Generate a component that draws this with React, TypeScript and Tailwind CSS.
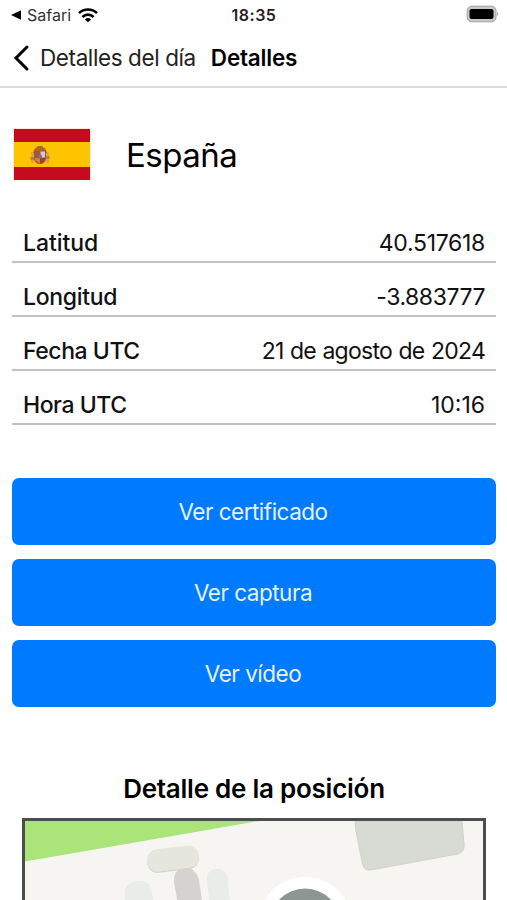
const rows = [
  { label: 'Latitud', value: '40.517618', labelClass: 'tracking-[-0.05px]', valueClass: 'tracking-[-0.3px]' },
  { label: 'Longitud', value: '-3.883777', labelClass: 'tracking-[-0.3px]', valueClass: 'tracking-[-0.45px]' },
  { label: 'Fecha UTC', value: '21 de agosto de 2024', labelClass: 'tracking-[-0.45px]', valueClass: 'tracking-[-0.75px] [word-spacing:0.75px]' },
  { label: 'Hora UTC', value: '10:16', labelClass: 'tracking-[-0.45px]', valueClass: 'tracking-[0px]' },
];

const actions = ['Ver certificado', 'Ver captura', 'Ver vídeo'];

function StatusBar() {
  return (
    <div className="grid h-[30px] shrink-0 grid-cols-3 items-center pl-[10px] pr-[8px]">
      <div className="flex items-center">
        <svg width="12" height="12" viewBox="0 0 12 12">
          <path d="M1 6 11 1.2v9.6z" fill="#000" />
        </svg>
        <span className="ml-[5px] text-[16px] leading-[20px] tracking-[0px] text-[#333]">Safari</span>
        <svg className="-mt-[1px] ml-[6px]" width="22" height="16" viewBox="0 0 22 16">
          <g fill="none" stroke="#000" strokeWidth="2.7">
            <path d="M2 6.1a13 13 0 0 1 18 0" />
            <path d="M5.4 9.9a8.2 8.2 0 0 1 11.2 0" />
          </g>
          <path d="M11 15.300 7.9 12.400a4.500 4.500 0 0 1 6.200 0z" fill="#000" />
        </svg>
      </div>
      <div className="-ml-[1px] text-center text-[16px] font-semibold leading-[20px] tracking-[0.5px] text-[#222]">18:35</div>
      <svg className="-mt-[2px] justify-self-end" width="33" height="18" viewBox="0 0 33 18">
        <rect x="1.2" y="1.2" width="28.8" height="15.6" rx="4.5" fill="#c8c8c8" stroke="#a0a0a0" strokeWidth="1" />
        <rect x="3.5" y="4" width="24" height="10" rx="2" fill="#000" />
        <path d="M31 7c1.8.8 1.8 3.2 0 4z" fill="#aaa" />
      </svg>
    </div>
  );
}

function SpainFlag() {
  return (
    <svg width="78" height="52" viewBox="0 0 78 52">
      <rect width="78" height="52" fill="#fbe6df" />
      <rect x="1" y="1" width="76" height="51" fill="#c60b1e" />
      <rect x="1" y="14" width="76" height="25" fill="#ffc400" />
      <path d="M18 24h3v11h-3zM33 24h3v11h-3z" fill="#d8a848" />
      <path d="M17.500 29h4v3h-4zM32.500 28h4v3h-4z" fill="#b9823a" />
      <path d="M20 25q1-6 7-7 6 1 7 7z" fill="#b4602f" />
      <path d="M24.5 18h5v2h-5z" fill="#8f762f" />
      <path d="M21 23h12v8q-1 5-6 5t-6-5z" fill="#a9553a" />
      <path d="M27.5 23.500h4.500v6h-4.500z" fill="#d9c6ca" />
      <path d="M22 30h5v5q-4-1-5-4z" fill="#c88736" />
      <path d="M27 30h5q0 4-5 6z" fill="#a23b35" />
      <circle cx="27" cy="28.500" r="2" fill="#77708c" />
    </svg>
  );
}

function PositionMap() {
  return (
    <div className="ml-[10px] mr-[10px] mt-[13px] h-[120px] border-[3px] border-[#4c4d4e] bg-[#f6f5f1]">
      <svg className="block" width="458" height="114" viewBox="25 821 458 114">
        <path d="M25 821H259L25 861.500z" fill="#abe478" />
        <path d="M355 821h107l2.200 24q.5 7-6.500 9L371 870q-7 1-8.500-6L355.500 829z" fill="#d8dad4" stroke="#cfcec3" strokeWidth="0.8" />
        <path d="M125 935V892c0-14 26-16 27 0l5 43z" fill="#eaece8" />
        <path d="M207 880c-1-15 20-15 21 0l5 55h-20z" fill="#eaece8" />
        <path d="M174 883c-2-19 20-22 25-3l8 55h-23z" fill="#d5d2cf" />
        <rect x="147" y="848.500" width="52" height="22.500" rx="10.500" transform="rotate(-7 173 860)" fill="#d4d5ca" />
        <rect x="147" y="847.300" width="52" height="22.500" rx="10.500" transform="rotate(-7 173 859)" fill="#e5e6de" />
        <circle cx="305" cy="924" r="47" fill="#fff" />
        <circle cx="305" cy="924" r="35.500" fill="#8e9693" />
      </svg>
    </div>
  );
}

export default function App() {
  return (
    <div className="flex h-[900px] w-full flex-col overflow-hidden bg-white font-['Inter','Liberation_Sans',sans-serif] text-[#111]">
      <StatusBar />
      <header className="flex h-[58px] shrink-0 items-center border-b-2 border-[#dcdcdc] pl-[12px]">
        <svg width="18" height="28" viewBox="0 0 18 28">
          <path d="M15 3 4 14l11 11" fill="none" stroke="#000" strokeWidth="3" strokeLinecap="round" strokeLinejoin="miter" />
        </svg>
        <span className="ml-[10px] text-[22.5px] leading-[28px] tracking-[-0.4px] text-[#222]">Detalles del día</span>
        <h1 className="ml-[15px] text-[22.5px] font-semibold leading-[28px] tracking-[-0.2px] text-black">Detalles</h1>
      </header>

      <main className="flex shrink-0 flex-col pl-[12px] pr-[11px]">
        <section className="mt-[40px] flex h-[52px] items-center pl-[1px]">
          <SpainFlag />
          <h2 className="ml-[35px] mt-[2px] text-[33px] leading-[42px] tracking-[-0.5px] text-black">España</h2>
        </section>

        <dl className="mt-[29px]">
          {rows.map((row) => (
            <div key={row.label} className="flex h-[54px] items-end justify-between border-b-2 border-[#c2c2c2] px-[11px] pb-[4px] text-[23px] leading-[28px]">
              <dt className={`font-medium ${row.labelClass}`}>{row.label}</dt>
              <dd className={row.valueClass}>{row.value}</dd>
            </div>
          ))}
        </dl>

        <div className="mt-[53px] flex flex-col gap-[14px]">
          {actions.map((action) => (
            <button key={action} className="h-[67px] rounded-[7px] bg-[#007aff] pr-[2px] text-[22.5px] leading-[28px] tracking-[-0.5px] text-[#e6f2ff]">
              {action}
            </button>
          ))}
        </div>

        <h2 className="mt-[66px] text-center text-[26px] font-semibold leading-[32px] tracking-[-0.25px] text-black">Detalle de la posición</h2>
        <PositionMap />
      </main>
    </div>
  );
}
